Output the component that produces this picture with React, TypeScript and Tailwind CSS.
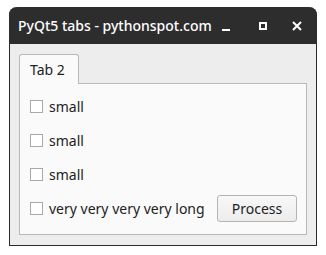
import React from 'react'

function Check({ label }: { label: string }) {
  return (
    <label className="flex items-center h-[27px] gap-[6px]">
      <span className="w-[13px] h-[13px] border border-[#a9a9a9] bg-white shrink-0" />
      <span>{label}</span>
    </label>
  )
}

export default function App() {
  return (
    <div
      className="w-[326px] h-[255px] bg-white pt-[7px] pl-[9px]"
      style={{ fontFamily: '"Noto Sans", "Open Sans", sans-serif' }}
    >
      <div className="w-[308px] h-[239px] flex flex-col bg-[#ededed] rounded-t-[8px] border-x border-b border-[#2a2a2a]">
        {/* title bar */}
        <div className="h-[37px] -mx-px bg-[#2d2d2d] rounded-t-[8px] flex items-center pl-[9px] pr-[15px] text-white text-[14px]">
          <span className="font-medium whitespace-nowrap">PyQt5 tabs - pythonspot.com</span>
          <div className="ml-auto shrink-0 flex items-center">
            <span className="block shrink-0 w-[8px] h-[2px] bg-white mt-[9px] mr-[29px]" />
            <span className="block shrink-0 w-[8px] h-[8px] border-2 border-white mr-[25px]" />
            <svg className="shrink-0" width="10" height="10" viewBox="0 0 10 10">
              <path d="M1 1L9 9M9 1L1 9" stroke="white" strokeWidth="2" />
            </svg>
          </div>
        </div>

        {/* body */}
        <div className="flex-1 flex flex-col px-[9px] pt-[10px] pb-[10px] text-[14px] text-[#222]">
          <div className="flex">
            <div className="w-[60px] h-[30px] bg-[#fafafa] border border-b-0 border-[#b9b9b9] rounded-t-[3px] pl-[10px] pt-[4px] relative z-10 -mb-px">
              Tab 2
            </div>
          </div>
          <div className="flex-1 bg-[#fafafa] border border-[#b9b9b9] pl-[10px] pr-[9px] pt-[9px] flex flex-col gap-[7px]">
            <Check label="small" />
            <Check label="small" />
            <Check label="small" />
            <div className="flex items-center justify-between">
              <Check label="very very very very long" />
              <button className="w-[80px] h-[27px] rounded-[3px] border border-[#b5b5b5] bg-gradient-to-b from-[#f8f8f8] to-[#ececec] text-[#222] text-[14px]">
                Process
              </button>
            </div>
          </div>
        </div>
      </div>
    </div>
  )
}
